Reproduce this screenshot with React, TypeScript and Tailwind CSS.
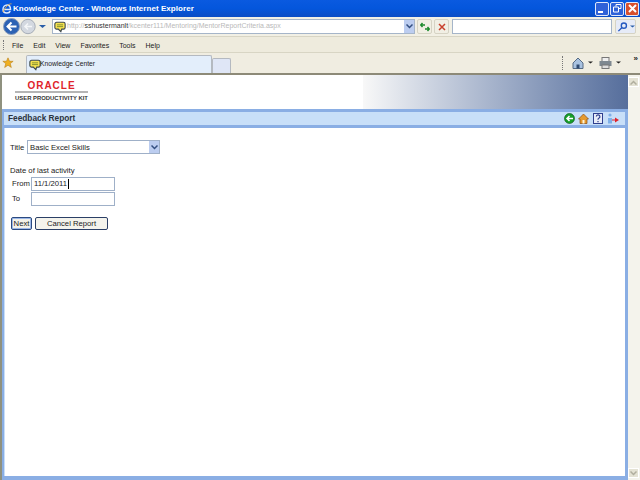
const sans = "font-['Liberation_Sans',Arial,sans-serif]";

function BubbleIcon() {
  return (
    <svg width="12" height="12" viewBox="0 0 14 14" className="shrink-0">
      <path d="M3 1.500h8a2 2 0 0 1 2 2v4a2 2 0 0 1-2 2H9l-1 3-3-3H3a2 2 0 0 1-2-2v-4a2 2 0 0 1 2-2z" fill="#f4e04d" stroke="#3f4a52" strokeWidth="1.300" />
      <path d="M3.500 4.500h7M3.500 6.500h7" stroke="#7a8a30" strokeWidth="1" />
    </svg>
  );
}

function Caret({ color = '#222', w = 7 }: { color?: string; w?: number }) {
  return (
    <svg width={w} height="3" viewBox="0 0 7 3" className="shrink-0">
      <path d="M0 0h7L3.500 3z" fill={color} />
    </svg>
  );
}

function Chevron() {
  return (
    <div className="ml-auto flex h-full w-[10px] items-center justify-center bg-[#bccdf0]">
      <svg width="7" height="5" viewBox="0 0 7 5" fill="none" stroke="#334f80" strokeWidth="1.500"><path d="M.5.5l3 3 3-3" /></svg>
    </div>
  );
}

function SmallBtn({ children }: { children: React.ReactNode }) {
  return (
    <div className="flex h-[15px] w-[15px] items-center justify-center rounded-[2px] border border-[#d6d3c4] bg-[#f1efe4]">
      {children}
    </div>
  );
}

function WinBtn({ bg, children }: { bg: string; children: React.ReactNode }) {
  return (
    <div className={`flex h-[14px] w-[14px] items-center justify-center rounded-[2px] border border-[#dfe8fa] ${bg}`}>
      {children}
    </div>
  );
}

export default function App() {
  return (
    <div className={`${sans} flex h-[480px] w-[640px] flex-col overflow-hidden bg-white text-[7.7px] text-[#222]`}>
      {/* titlebar */}
      <div className="flex h-[17px] shrink-0 items-center bg-gradient-to-b from-[#0a5ae0] via-[#0456dc] to-[#0a4cc4] pl-[2px] pr-[1px]">
        <svg width="10" height="11" viewBox="0 0 10 11" className="shrink-0">
          <path d="M2 6.500h6.500C8.500 3.500 7 2 5 2 2.800 2 1 4 1 6.500S2.800 10 5 10c1.500 0 2.700-.6 3.300-1.800" fill="none" stroke="#dce9ff" strokeWidth="1.500" />
          <path d="M1 9C3 4 7 .5 9.500.8" fill="none" stroke="#f0b040" strokeWidth=".9" />
        </svg>
        <span className="ml-[1px] text-[8px] font-bold tracking-[0.05px] text-white">Knowledge Center - Windows Internet Explorer</span>
        <div className="ml-auto flex gap-[1px]">
          <WinBtn bg="bg-[#2f62d8]"><div className="mt-[7px] mr-[3px] h-[2px] w-[5px] bg-white" /></WinBtn>
          <WinBtn bg="bg-[#2f62d8]">
            <svg width="9" height="9" viewBox="0 0 9 9" fill="none" stroke="white"><path d="M3 2.500V.5h5v4H6M.5 3h5v5h-5z" /></svg>
          </WinBtn>
          <WinBtn bg="bg-[#d8502c]">
            <svg width="9" height="9" viewBox="0 0 9 9" stroke="white" strokeWidth="2"><path d="M1 1l7 7M8 1l-7 7" /></svg>
          </WinBtn>
        </div>
      </div>

      {/* address bar */}
      <div className="flex h-[19px] shrink-0 items-center bg-[#f2f0e5] pl-[3px]">
        <svg width="33" height="17" viewBox="0 0 33 17" className="shrink-0">
          <circle cx="25" cy="8.500" r="7.200" fill="#d3d8e0" stroke="#a6adb8" />
          <path d="M29 8.500h-7M25 5.500l-3 3 3 3" fill="none" stroke="#f4f6f8" strokeWidth="1.600" />
          <circle cx="8.500" cy="8.500" r="8" fill="#2c62b4" stroke="#8c9fbd" />
          <path d="M13.500 8.500H4.500M8.500 4.500l-4 4 4 4" fill="none" stroke="white" strokeWidth="2" />
        </svg>
        <div className="ml-[3px]"><Caret color="#2a5ea8" /></div>
        <div className="ml-[6px] flex h-[15px] w-[363px] items-center border border-[#a5b5c9] bg-white">
          <div className="ml-[1px]"><BubbleIcon /></div>
          <span className="ml-[1px] whitespace-nowrap text-[7px] text-[#b9b9b9]">
            http://<span className="text-[#333]">sshustermanlt</span>/kcenter111/Mentoring/MentorReportCriteria.aspx
          </span>
          <Chevron />
        </div>
        <div className="ml-[2px]">
          <SmallBtn>
            <svg width="10" height="10" viewBox="0 0 10 10" fill="none" stroke="#1c8a2c" strokeWidth="1.400"><path d="M5 3H.8M2.500 1L.8 3l1.700 2M5 7h4.200M7.500 5l1.700 2-1.700 2" /></svg>
          </SmallBtn>
        </div>
        <div className="ml-[2px]">
          <SmallBtn>
            <svg width="8" height="8" viewBox="0 0 8 8" stroke="#c8402c" strokeWidth="1.500"><path d="M1 1l6 6M7 1L1 7" /></svg>
          </SmallBtn>
        </div>
        <div className="ml-[3px] h-[15px] w-[160px] border border-[#a5b5c9] bg-white" />
        <div className="ml-[3px] flex h-[15px] w-[21px] items-center rounded-[2px] border border-[#d6d3c4] bg-[#e6ebf7]">
          <svg width="12" height="12" viewBox="0 0 12 12" fill="none" stroke="#2458c0" strokeWidth="1.500" className="ml-[1px]"><circle cx="7.500" cy="4.500" r="2.800" /><path d="M5.500 6.500L1.500 10.500" /></svg>
          <div className="ml-[2px]"><Caret color="#2a5ea8" w={5} /></div>
        </div>
      </div>

      {/* menu bar */}
      <div className="flex h-[17px] shrink-0 items-center border-y border-[#d8d5c4] bg-[#eeebdd] pl-[3px]">
        <div className="h-[10px] border-l border-dotted border-[#777]" />
        <div className="ml-[8px] flex gap-[10px] pt-[1px] text-[7px] leading-none">
          <span>File</span>
          <span>Edit</span>
          <span>View</span>
          <span>Favorites</span>
          <span>Tools</span>
          <span>Help</span>
        </div>
      </div>

      {/* tab bar */}
      <div className="flex h-[20px] shrink-0 items-end bg-[#f0ede1]">
        <svg width="12" height="12" viewBox="0 0 14 14" className="mb-[4px] ml-[2px] shrink-0">
          <path d="M7 1l1.800 4h4.200l-3.400 2.700 1.300 4.500L7 9.600l-3.900 2.600 1.300-4.500L1 5h4.200z" fill="#f0b020" stroke="#b8801a" strokeWidth=".7" />
        </svg>
        <div className="ml-[12px] flex h-[18px] w-[186px] items-center rounded-t-[2px] border border-b-0 border-[#b4b9c0] bg-[#e3eefb] pl-[2px]">
          <BubbleIcon />
          <span className="-ml-[1px] text-[6.700px]">Knowledge Center</span>
        </div>
        <div className="h-[15px] w-[19px] rounded-t-[2px] border border-b-0 border-[#b4b9c0] bg-[#dfe6f6]" />
        <div className="ml-auto mb-[3px] flex items-center">
          <div className="h-[14px] border-l border-dotted border-[#777]" />
          <svg width="12" height="12" viewBox="0 0 12 12" className="ml-[9px]">
            <path d="M1 6l5-5 5 5v5.500H1z" fill="#a9c2e0" stroke="#566b84" />
            <rect x="4.500" y="7.500" width="3" height="4" fill="#2f4a70" />
          </svg>
          <div className="ml-[4px]"><Caret w={5} /></div>
          <svg width="13" height="12" viewBox="0 0 13 12" className="ml-[6px]">
            <rect x="3" y="0.500" width="7" height="4" fill="#eee" stroke="#777" />
            <rect x="0.500" y="4" width="12" height="5" fill="#7e8890" />
            <rect x="3" y="8" width="7" height="3.500" fill="#ddd" stroke="#777" />
          </svg>
          <div className="ml-[4px]"><Caret w={5} /></div>
          <span className="mb-[7px] ml-[13px] mr-[2px] text-[8px] leading-none font-bold">»</span>
        </div>
      </div>
      <div className="h-[2px] shrink-0 bg-[#8d8a78]" />

      {/* page */}
      <div className="flex min-h-0 flex-1">
        <div className="flex min-w-0 flex-1 flex-col border-l-2 border-[#8f917f]">
          <div className="flex h-[34px] shrink-0 bg-white">
            <div className="ml-[13px] mt-[6px] flex w-[73px] flex-col items-center">
              <span className="text-[10px] leading-[10px] font-bold tracking-[1px] text-[#e0242c]">ORACLE</span>
              <div className="h-[2px] w-full bg-[#b5b5b5]" />
              <span className="mt-[1px] whitespace-nowrap text-[5.900px] leading-[8px] font-bold text-[#333]">USER PRODUCTIVITY KIT</span>
            </div>
            <div className="ml-auto h-full w-[265px] bg-gradient-to-r from-[#f8f8f8] to-[#566e9c]" />
          </div>

          <div className="flex min-h-0 flex-1 flex-col border-r-[3px] border-b-[4px] border-l-2 border-[#8aaee4] bg-white">
            <div className="h-[3px] shrink-0 bg-[#8aaee4]" />
            <div className="flex h-[13px] shrink-0 items-center bg-[#c8dff8] pl-[4px] pr-[6px]">
              <span className="text-[8.300px] font-bold text-[#2c3440]">Feedback Report</span>
              <div className="ml-auto flex items-center">
                <svg width="11" height="11" viewBox="0 0 11 11">
                  <circle cx="5.500" cy="5.500" r="5" fill="#17a02a" stroke="#0a4a10" strokeWidth=".6" />
                  <path d="M9 5.500H3M5.500 3L3 5.500 5.500 8" fill="none" stroke="white" strokeWidth="1.500" />
                </svg>
                <svg width="11" height="11" viewBox="0 0 11 11" className="ml-[3px]">
                  <path d="M5.500 1L10.500 6H9v4.500H2V6H.5z" fill="#e59a2e" stroke="#8a4c10" strokeWidth=".7" />
                  <rect x="4.500" y="7" width="2" height="3.500" fill="#fff3d8" />
                </svg>
                <svg width="10" height="11" viewBox="0 0 10 11" className="ml-[4px]">
                  <rect x=".5" y=".5" width="9" height="10" fill="#e8ecf8" stroke="#2f3f8e" />
                  <path d="M3.300 3.500a1.800 1.800 0 1 1 2.500 1.800c-.6.300-.8.700-.8 1.500M5 8v1.300" fill="none" stroke="#2f3f8e" strokeWidth="1.200" />
                </svg>
                <svg width="12" height="11" viewBox="0 0 12 11" className="ml-[4px]">
                  <circle cx="3" cy="2" r="1.600" fill="#7fb0e8" />
                  <path d="M1 5h4v5.500H1z" fill="#7fb0e8" />
                  <path d="M5 6.500h3V4.500L12 7 8 9.500v-2H5z" fill="#e0242c" />
                </svg>
              </div>
            </div>
            <div className="h-[3px] shrink-0 bg-[#8aaee4]" />

            <div className="flex flex-1 flex-col border-l border-[#c8dff8] pl-[5px] pt-[12px]">
              <div className="flex items-center">
                <span className="w-[17px] pt-[1px]">Title</span>
                <div className="flex h-[14px] w-[133px] items-center border border-[#9fb0c8] bg-white pl-[2px]">
                  <span className="pt-[1px] leading-none">Basic Excel Skills</span>
                  <Chevron />
                </div>
              </div>
              <span className="mt-[12px] leading-[10px]">Date of last activity</span>
              <div className="mt-[1px] flex items-center">
                <span className="ml-[2px] w-[19px]">From</span>
                <div className="flex h-[14px] w-[84px] items-center border border-[#9fb0c8] bg-white pl-[2px]">
                  11/1/2011<span className="ml-[1px] h-[10px] w-[1px] bg-black" />
                </div>
              </div>
              <div className="mt-[1px] flex items-center">
                <span className="ml-[2px] w-[19px]">To</span>
                <div className="h-[14px] w-[84px] border border-[#9fb0c8] bg-white" />
              </div>
              <div className="mt-[11px] flex items-center">
                <div className="ml-[1px] flex h-[13px] w-[21px] items-center justify-center rounded-[2px] border border-[#2b4a80] bg-[#f4f2e8] shadow-[inset_0_0_0_1px_#9db8e8]">Next</div>
                <div className="ml-[3px] flex h-[13px] w-[73px] items-center justify-center rounded-[2px] border border-[#2b3f66] bg-[#f4f3ec]">Cancel Report</div>
              </div>
            </div>
          </div>
        </div>

        {/* scrollbar */}
        <div className="flex w-[12px] shrink-0 flex-col justify-between bg-[#f4f3ec] pb-[2px] pr-[1px] pt-[2px]">
          <div className="flex h-[10px] items-center justify-center border border-white bg-[#e4e2d4]">
            <svg width="7" height="5" viewBox="0 0 7 5" fill="none" stroke="#b0ae9e" strokeWidth="1.500"><path d="M.5 4.500l3-3 3 3" /></svg>
          </div>
          <div className="flex h-[10px] items-center justify-center border border-white bg-[#e4e2d4]">
            <svg width="7" height="5" viewBox="0 0 7 5" fill="none" stroke="#b0ae9e" strokeWidth="1.500"><path d="M.5.5l3 3 3-3" /></svg>
          </div>
        </div>
      </div>
    </div>
  );
}
